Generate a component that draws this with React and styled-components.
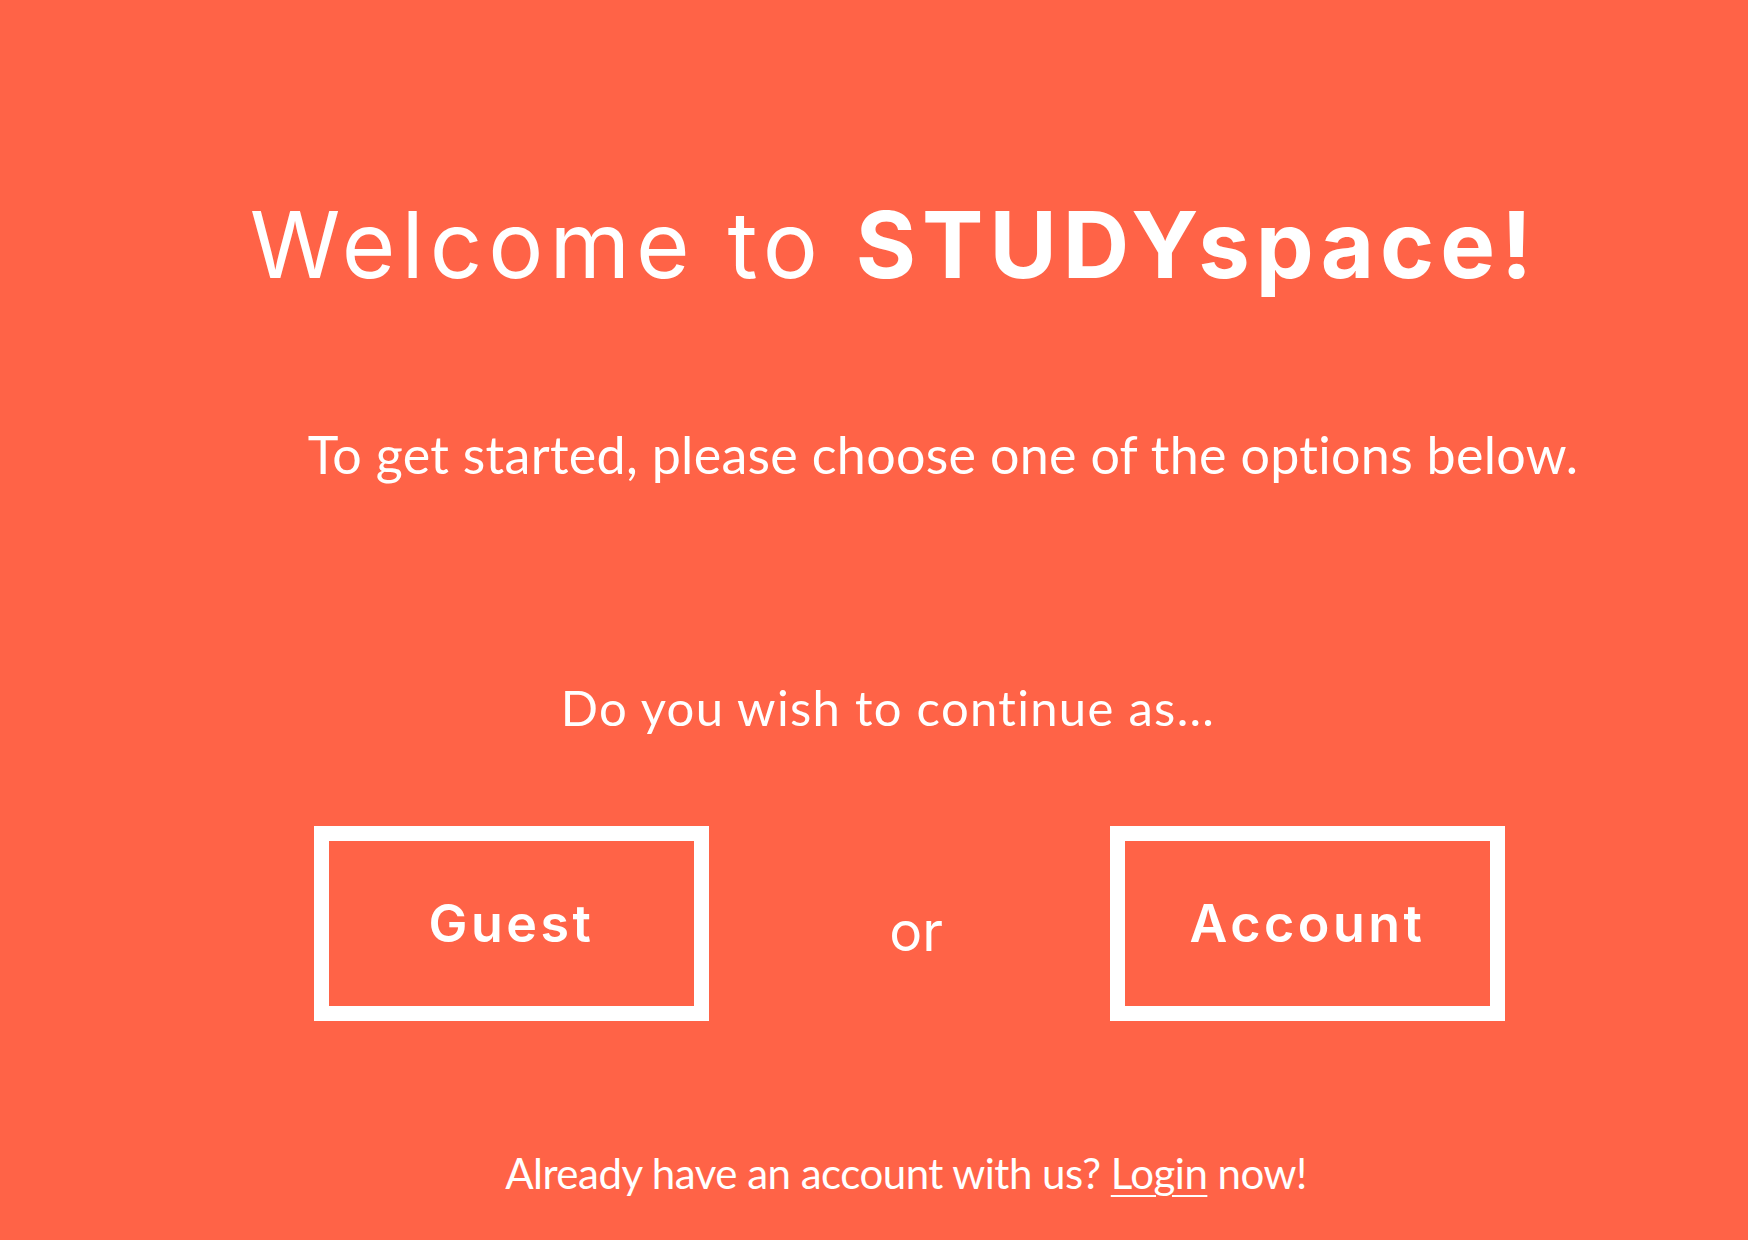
import styled, { createGlobalStyle } from "styled-components";

const GlobalStyle = createGlobalStyle`
  html, body {
    margin: 0;
    padding: 0;
    background: #ff6347;
  }
`;

const App = () => {
  return (
    <>
      <GlobalStyle />
      <Page>
        <Title $shift={40}>
          Welcome to <strong>STUDYspace!</strong>
        </Title>
        <Subtitle $shift={138}>
          To get started, please choose one of the options below.
        </Subtitle>
        <Question $shift={28}>Do you wish to continue as...</Question>
        <ChoiceRow $shift={71}>
          <ChoiceButton>Guest</ChoiceButton>
          <Or>or</Or>
          <ChoiceButton>Account</ChoiceButton>
        </ChoiceRow>
        <Footer $shift={64}>
          Already have an account with us? <LoginLink href="#">Login</LoginLink> now!
        </Footer>
      </Page>
    </>
  );
};

export default App;

const Page = styled.main`
  box-sizing: border-box;
  width: 100%;
  min-height: 1240px;
  padding-top: 199px;
  background: #ff6347;
  color: #ffffff;
  display: flex;
  flex-direction: column;
`;

const Line = styled.div`
  box-sizing: border-box;
  width: 100%;
  text-align: center;
  padding-left: ${(p) => p.$shift || 0}px;
  line-height: 1;
  white-space: nowrap;
`;

const Title = styled(Line)`
  font-family: Inter, "DejaVu Sans", sans-serif;
  font-size: 92px;
  font-weight: 400;
  letter-spacing: 6px;

  strong {
    font-weight: 700;
  }
`;

const Subtitle = styled(Line)`
  margin-top: 137px;
  font-family: Lato, "Open Sans", sans-serif;
  font-size: 52px;
  letter-spacing: 0.3px;
`;

const Question = styled(Line)`
  margin-top: 203px;
  font-family: Lato, "Open Sans", sans-serif;
  font-size: 49px;
  letter-spacing: 1.3px;
`;

const ChoiceRow = styled.div`
  box-sizing: border-box;
  width: 100%;
  margin-top: 94px;
  padding-left: ${(p) => p.$shift || 0}px;
  display: flex;
  justify-content: center;
`;

const ChoiceButton = styled.button`
  box-sizing: border-box;
  width: 395px;
  height: 195px;
  border: 15px solid #ffffff;
  background: transparent;
  color: #ffffff;
  font-family: Inter, "DejaVu Sans", sans-serif;
  font-size: 52px;
  font-weight: 600;
  letter-spacing: 3.5px;
  display: flex;
  align-items: center;
  justify-content: center;
  padding: 0;
  cursor: pointer;
`;

const Or = styled.span`
  width: 401px;
  padding-top: 78px;
  padding-left: 13px;
  box-sizing: border-box;
  text-align: center;
  font-family: Inter, "DejaVu Sans", sans-serif;
  font-size: 55px;
  line-height: 1;
`;

const Footer = styled(Line)`
  margin-top: 131px;
  font-family: Lato, "Open Sans", sans-serif;
  font-size: 42px;
  letter-spacing: -0.5px;
`;

const LoginLink = styled.a`
  color: #ffffff;
  text-decoration: underline;
  text-decoration-thickness: 2px;
  text-underline-offset: 6px;
`;
